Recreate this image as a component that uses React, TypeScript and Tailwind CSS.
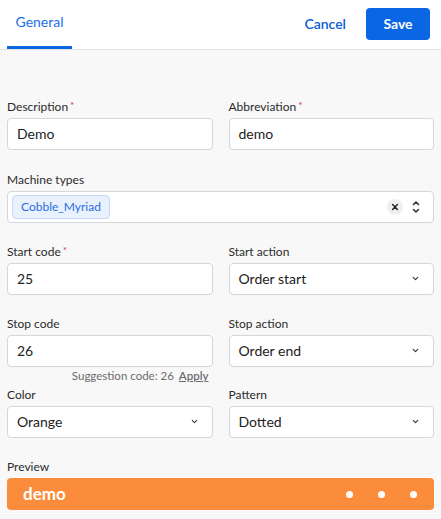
import React from 'react';

const font = { fontFamily: '"Source Sans Pro", Lato, "Noto Sans", sans-serif' };

const Label: React.FC<{ text: string; required?: boolean }> = ({ text, required }) => (
  <div className="h-4 mb-[3px] flex items-start text-[12px] leading-4 text-[#2b2b2b]">
    {text}
    {required && <span className="ml-[2px] text-[10px] leading-3 text-[#d63a3a]">*</span>}
  </div>
);

const Chevron = () => (
  <svg width="9" height="9" viewBox="0 0 24 24" fill="none" stroke="#333" strokeWidth={2.8} strokeLinecap="round" strokeLinejoin="round">
    <path d="M6 9l6 6 6-6" />
  </svg>
);

const TextInput: React.FC<{ value: string }> = ({ value }) => (
  <div className="h-8 flex items-center rounded border border-[#d3d6dc] bg-white px-[9px] pb-[1px] text-[14px] text-[#222]">
    {value}
  </div>
);

const Select: React.FC<{ value: string }> = ({ value }) => (
  <div className="h-8 flex items-center justify-between rounded border border-[#d3d6dc] bg-white pl-[9px] pr-[13px] pb-[1px] text-[14px] text-[#222]">
    <span>{value}</span>
    <Chevron />
  </div>
);

const Field: React.FC<{ label: string; required?: boolean; children: React.ReactNode }> = ({ label, required, children }) => (
  <div className="flex flex-col">
    <Label text={label} required={required} />
    {children}
  </div>
);

export default function App() {
  return (
    <div className="w-[441px] h-[519px] bg-[#f8f8f8] overflow-hidden" style={font}>
      {/* Header */}
      <div className="h-[50px] bg-white border-b border-[#e3e3e3] flex justify-between px-[7px]">
        <div className="flex flex-col w-[65px] items-center">
          <div className="h-[46px] flex items-center pb-[4px] text-[14px] text-[#1c6fe8]">General</div>
          <div className="h-[3px] w-full bg-[#0b66e4]" />
        </div>
        <div className="flex items-center gap-5 pr-[4px] pb-[2px]">
          <button className="text-[14px] font-semibold text-[#0b5cd5]">Cancel</button>
          <button className="h-8 w-16 rounded bg-[#0b66e4] text-[14px] font-bold text-white">Save</button>
        </div>
      </div>

      {/* Body */}
      <div className="px-[7px] pt-[49px] flex flex-col">
        <div className="grid grid-cols-2 gap-x-4">
          <Field label="Description" required><TextInput value="Demo" /></Field>
          <Field label="Abbreviation" required><TextInput value="demo" /></Field>
        </div>

        <div className="mt-[22px]">
          <Field label="Machine types">
            <div className="h-8 flex items-center justify-between rounded border border-[#d3d6dc] bg-white pl-[4px] pr-[12px]">
              <span className="h-6 flex items-center rounded-sm border border-[#c4d8f7] bg-[#e9f1fd] px-[8px] text-[12px] text-[#2a6ee0]">
                Cobble_Myriad
              </span>
              <div className="flex items-center gap-[8px]">
                <span className="w-4 h-4 rounded-full bg-[#efefef] flex items-center justify-center">
                  <svg width="8" height="8" viewBox="0 0 10 10" stroke="#222" strokeWidth={1.8} strokeLinecap="round">
                    <path d="M2 2l6 6M8 2l-6 6" />
                  </svg>
                </span>
                <svg width="10" height="14" viewBox="0 0 10 14" fill="none" stroke="#333" strokeWidth={1.6} strokeLinecap="round" strokeLinejoin="round">
                  <path d="M2.5 4.5L5 2l2.5 2.5M2.5 9.5L5 12l2.5-2.5" />
                </svg>
              </div>
            </div>
          </Field>
        </div>

        <div className="mt-[21px] grid grid-cols-2 gap-x-4">
          <Field label="Start code" required><TextInput value="25" /></Field>
          <Field label="Start action"><Select value="Order start" /></Field>
        </div>

        <div className="mt-[21px] grid grid-cols-2 gap-x-4">
          <div className="flex flex-col">
            <Label text="Stop code" />
            <TextInput value="26" />
            <div className="h-4 mt-[1px] flex justify-end items-center pr-[4px] text-[11.5px] text-[#6b6b6b]">
              Suggestion code: 26
              <span className="ml-[5px] font-semibold underline">Apply</span>
            </div>
          </div>
          <Field label="Stop action"><Select value="Order end" /></Field>
        </div>

        <div className="mt-[3px] grid grid-cols-2 gap-x-4">
          <Field label="Color"><Select value="Orange" /></Field>
          <Field label="Pattern"><Select value="Dotted" /></Field>
        </div>

        <div className="mt-[21px]">
          <Field label="Preview">
            <div className="h-8 rounded bg-[#fb8c3c] flex items-center justify-between pl-[16px] pr-[17px]">
              <span className="text-[17px] font-bold text-white">demo</span>
              <div className="flex items-center gap-[25px]">
                <span className="w-[7px] h-[7px] rounded-full bg-white" />
                <span className="w-[7px] h-[7px] rounded-full bg-white" />
                <span className="w-[7px] h-[7px] rounded-full bg-white" />
              </div>
            </div>
          </Field>
        </div>
      </div>
    </div>
  );
}
